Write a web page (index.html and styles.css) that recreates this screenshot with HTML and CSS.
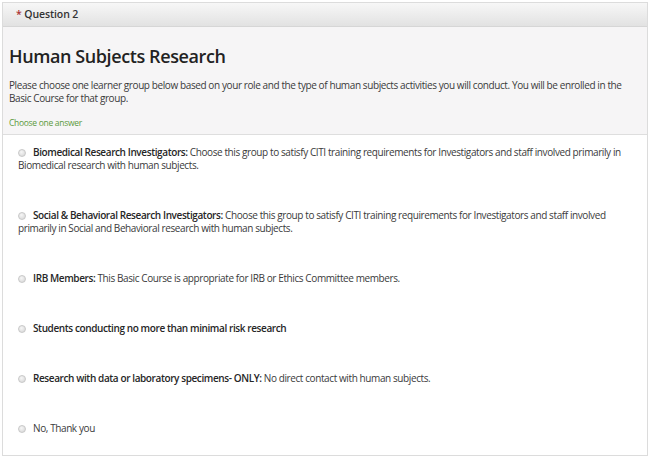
FILE: index.html
```html
<!DOCTYPE html>
<html lang="en">
<head>
  <meta charset="UTF-8" />
  <title>Question 2</title>
  <link rel="stylesheet" href="styles.css">
</head>
<body>
  <!-- ====================== QUESTION PANEL ====================== -->
  <section class="question">
    <header class="q-head"><span class="req">*</span> Question 2</header>

    <div class="q-intro">
      <h1>Human Subjects Research</h1>
      <p>Please choose one learner group below based on your role and the type of human subjects activities you will conduct. You will be enrolled in the Basic Course for that group.</p>
      <p class="hint">Choose one answer</p>
    </div>

    <form class="q-answers">
      <label class="opt"><input type="radio" name="group" /><b>Biomedical Research Investigators:</b> Choose this group to satisfy CITI training requirements for Investigators and staff involved primarily in Biomedical research with human subjects.</label>
      <label class="opt"><input type="radio" name="group" /><b>Social &amp; Behavioral Research Investigators:</b> Choose this group to satisfy CITI training requirements for Investigators and staff involved primarily in Social and Behavioral research with human subjects.</label>
      <label class="opt"><input type="radio" name="group" /><b>IRB Members:</b> This Basic Course is appropriate for IRB or Ethics Committee members.</label>
      <label class="opt"><input type="radio" name="group" /><b>Students conducting no more than minimal risk research</b></label>
      <label class="opt"><input type="radio" name="group" /><b>Research with data or laboratory specimens- ONLY:</b> No direct contact with human subjects.</label>
      <label class="opt"><input type="radio" name="group" />No, Thank you</label>
    </form>
  </section>
</body>
</html>
```

FILE: styles.css
```css
/* --- Reset & base ---------------------------------------------------- */
* { box-sizing: border-box; margin: 0; padding: 0; }
body { font-family: "Open Sans", "Liberation Sans", sans-serif; background: #fff; color: #3a3a3a; padding: 2px 2px 0 2px; }

/* --- Panel ----------------------------------------------------------- */
.question { border: 1px solid #dcdcdc; height: 454px; display: flex; flex-direction: column; }
.q-head {
  height: 24px; padding: 4px 0 0 13px;
  font-size: 10.5px; font-weight: 600; color: #333; letter-spacing: -0.1px;
  background: linear-gradient(#f7f7f7, #e2e2e2);
  border-bottom: 1px solid #d6d6d6;
}
.q-head .req { color: #a33; }

.q-intro { background: #f6f5f6; padding: 16px 8px 5px 6px; border-bottom: 1px solid #dedede; }
.q-intro h1 { font-size: 18px; font-weight: 600; color: #222; line-height: 26px; margin-bottom: 10px; letter-spacing: -0.4px; }
.q-intro p { font-size: 10px; line-height: 13px; letter-spacing: -0.4px; }
.q-intro .hint { font-size: 8.5px; color: #5c9a3c; margin-top: 11px; letter-spacing: -0.3px; }

.q-answers { background: #fff; flex: 1; padding: 11px 12px 0 15px; display: flex; flex-direction: column; gap: 37px; }
.opt { display: block; font-size: 10px; line-height: 13px; letter-spacing: -0.4px; }
.opt b { font-weight: 600; color: #262626; }
.opt input {
  appearance: none; display: inline-block;
  width: 8px; height: 8px; margin: 0 7px 0 0; vertical-align: -1px;
  border: 1px solid #c8c8c8; border-radius: 50%;
  background: radial-gradient(circle at 40% 35%, #f6f6f6, #d4d4d4);
}
```
